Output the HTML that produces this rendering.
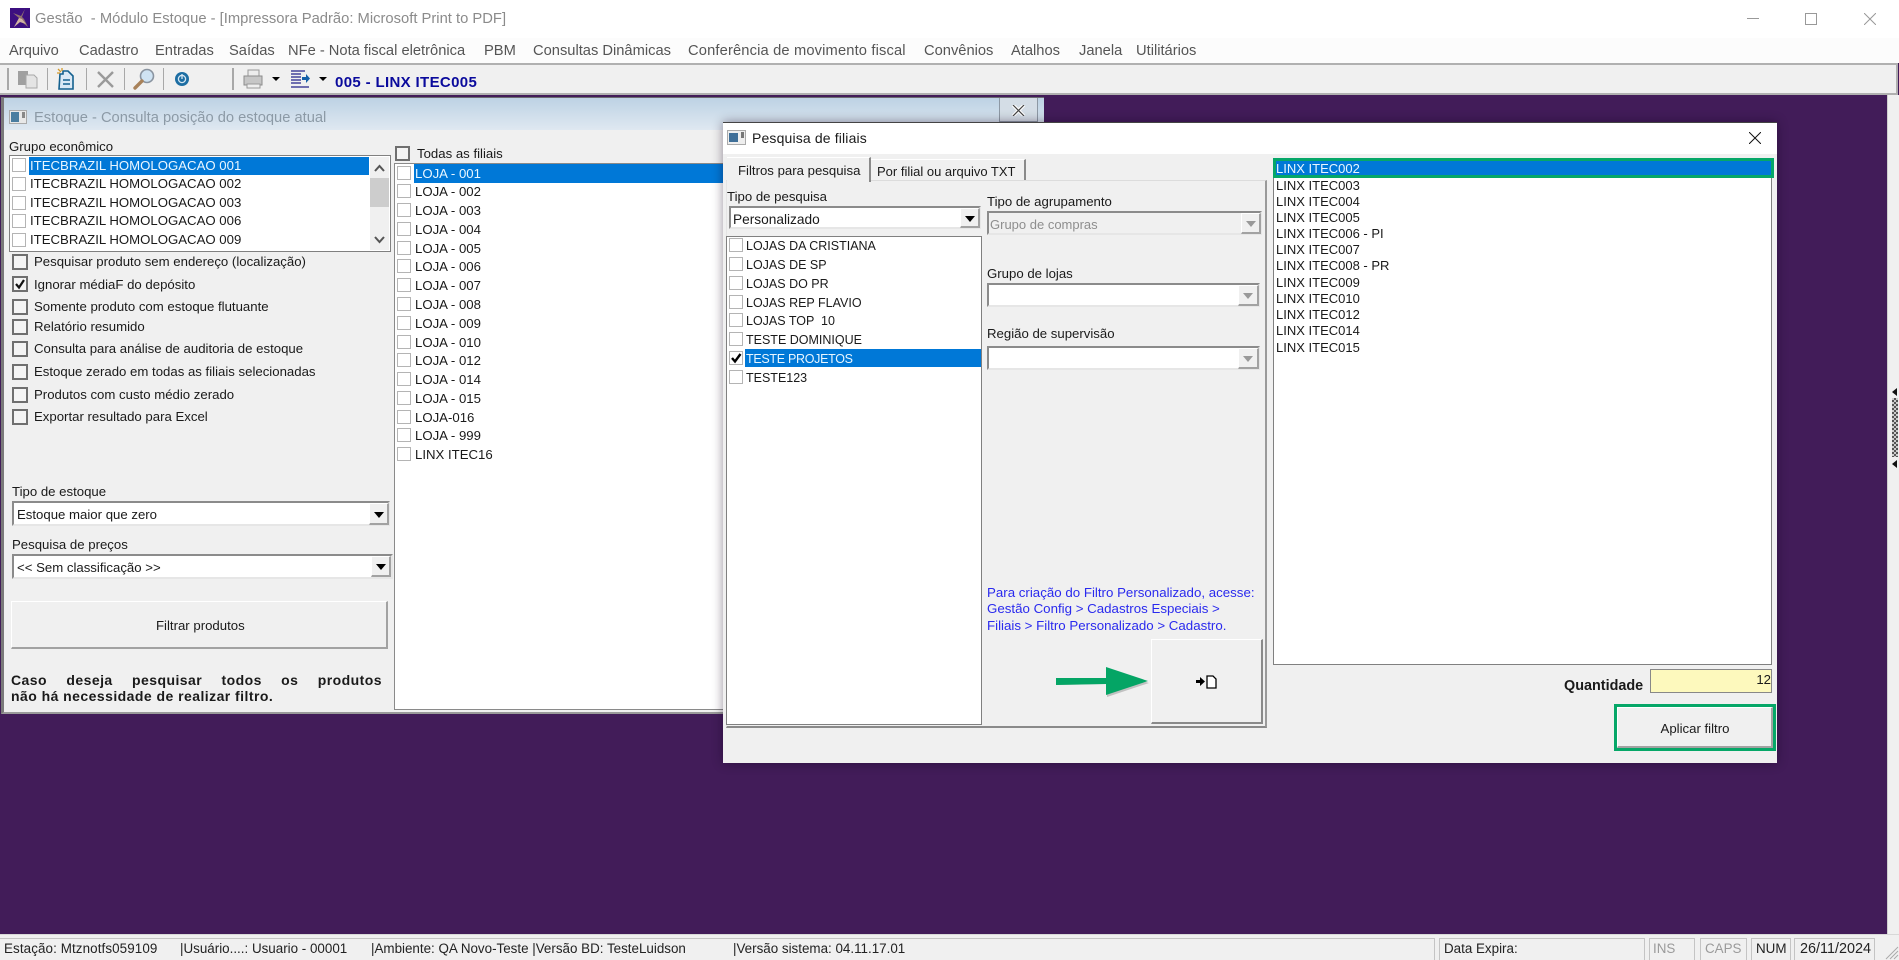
<!DOCTYPE html>
<html><head><meta charset="utf-8"><title>Gestão</title>
<style>
html,body{margin:0;padding:0;width:1899px;height:960px;overflow:hidden;background:#421c59}
*{box-sizing:border-box}
body{position:relative;font-family:"Liberation Sans",sans-serif;font-size:13.2px;color:#1a1a1a}
.a,.t{position:absolute}
.t{white-space:nowrap;line-height:16px;height:16px;margin-top:1px}
.m{font-size:14.7px;color:#555;top:42px}
.f13{font-size:13px}
.f125{font-size:12.5px}
.c1{position:absolute;width:16px;height:16px;border:2px solid #6f6f6f;background:#f4f4f4}
.c2{position:absolute;width:14px;height:14px;border:1px solid #b4b4b4;background:#fff}
.sep{position:absolute;top:68px;width:1px;height:22px;background:#a8a8a8}
.combo{position:absolute;background:#fff;border:2px solid #8b8b8b;border-right-color:#e6e6e6;border-bottom-color:#e6e6e6}
.btn{position:absolute;background:#f0f0f0;border-right:2px solid #a2a2a2;border-bottom:2px solid #a2a2a2;border-top:1px solid #fff;border-left:1px solid #fff}
.ar{position:absolute;width:0;height:0;border-left:5px solid transparent;border-right:5px solid transparent;border-top:6px solid #000}
.s{font-size:13.4px;color:#222;top:940px}
.cell{position:absolute;top:938px;height:22px;border:1px solid #c4c4c4;border-bottom:none}
</style></head><body>

<!-- title bar -->
<div class="a" style="left:0;top:0;width:1899px;height:38px;background:#fff"></div>
<svg class="a" style="left:10px;top:8px" width="20" height="20" viewBox="0 0 20 20"><rect width="20" height="20" fill="#3c0f80"/><path d="M15 1L11 8L3 5L9 10L4 19L10 14L13 15L18 19L14 11L12 9Z" fill="#8f7070"/><path d="M9 10L4 19L10 14L16 16L12 11Z" fill="#d2b4a4"/></svg>
<div class="t" style="left:35px;top:10px;font-size:14.77px;color:#8b8b8b;white-space:pre">Gestão  - Módulo Estoque - [Impressora Padrão: Microsoft Print to PDF]</div>
<div class="a" style="left:1747px;top:18px;width:12px;height:1px;background:#999"></div>
<div class="a" style="left:1805px;top:13px;width:12px;height:12px;border:1px solid #999"></div>
<svg class="a" style="left:1864px;top:13px" width="12" height="12" viewBox="0 0 12 12"><path d="M0 0L12 12M12 0L0 12" stroke="#999" fill="none"/></svg>

<!-- menu -->
<div class="a" style="left:0;top:38px;width:1899px;height:25px;background:#fcfcfc"></div>
<div class="t m" style="left:9px">Arquivo</div>
<div class="t m" style="left:79px">Cadastro</div>
<div class="t m" style="left:155px">Entradas</div>
<div class="t m" style="left:229px">Saídas</div>
<div class="t m" style="left:288px">NFe - Nota fiscal eletrônica</div>
<div class="t m" style="left:484px">PBM</div>
<div class="t m" style="left:533px">Consultas Dinâmicas</div>
<div class="t m" style="left:688px;letter-spacing:.15px">Conferência de movimento fiscal</div>
<div class="t m" style="left:924px">Convênios</div>
<div class="t m" style="left:1011px">Atalhos</div>
<div class="t m" style="left:1079px">Janela</div>
<div class="t m" style="left:1136px">Utilitários</div>

<!-- toolbar -->
<div class="a" style="left:0;top:63px;width:1898px;height:32px;background:#f0f0f0;border:2px solid #b0b0b0;border-left:none"></div>
<div class="sep" style="left:7px;width:2px"></div><div class="sep" style="left:47px"></div><div class="sep" style="left:86px"></div><div class="sep" style="left:124px"></div><div class="sep" style="left:163px"></div><div class="sep" style="left:232px;width:2px"></div>
<svg class="a" style="left:0;top:64px" width="340" height="30" viewBox="0 64 340 30">
<path d="M18 71h10v14h-10z" fill="#a0a0a0"/><path d="M26 75h8l3 3v10h-11z" fill="#e4e4e4" stroke="#a8a8a8"/>
<path d="M60 74h3v-3h5l5 5v13h-14z" fill="#dbe9f5" stroke="#14618f" stroke-width="1.6"/><path d="M63 80h7M63 84h7" stroke="#14618f" stroke-width="1.5"/><path d="M58 69l3 3M62 68v3M57 73h3" stroke="#d59a2c" stroke-width="1.3"/>
<path d="M98 72L113 87M113 72L98 87" stroke="#9a9a9a" stroke-width="2.4"/>
<circle cx="147" cy="76" r="6.5" fill="#cfe3f3" stroke="#8a94a0" stroke-width="1.6"/><path d="M142 81L135 88" stroke="#a8825a" stroke-width="3.4" stroke-linecap="round"/>
<circle cx="182" cy="79" r="7" fill="#1d6ea3"/><circle cx="182" cy="79" r="3.6" fill="none" stroke="#d6e6f2" stroke-width="1.3"/><path d="M182 74v5" stroke="#d6e6f2" stroke-width="1.3"/>
<path d="M248 70h11v6h-11z" fill="#ececec" stroke="#999"/><path d="M244 76h18v9h-18z" fill="#c6c6c6" stroke="#8c8c8c"/><path d="M247 84h13v4h-13z" fill="#eee" stroke="#999"/>
<path d="M272 77h8l-4 4z" fill="#000"/>
<path d="M291 71h14M291 74h10M291 77h10M291 80h10M291 83h10M291 87h18" stroke="#22228a" stroke-width="1.3"/><path d="M302 77h4v-3l4 4.500-4 4.500v-3h-4z" fill="#1560a8"/>
<path d="M319 77h8l-4 4z" fill="#000"/>
</svg>
<div class="t" style="left:335px;top:74px;font-size:15px;font-weight:bold;color:#0a0a9c;letter-spacing:.35px">005 - LINX ITEC005</div>

<!-- right strip -->
<div class="a" style="left:1887px;top:95px;width:12px;height:843px;background:#f0f0f0;border-left:1px solid #cfcfcf"></div>
<div class="a" style="left:1892px;top:388px;width:0;height:0;border-top:4px solid transparent;border-bottom:4px solid transparent;border-right:5px solid #111"></div>
<div class="a" style="left:1892px;top:398px;width:6px;height:59px;background:conic-gradient(#555 25%,#ccc 0 50%,#555 0 75%,#ccc 0) 0 0/4px 4px"></div>
<div class="a" style="left:1892px;top:460px;width:0;height:0;border-top:4px solid transparent;border-bottom:4px solid transparent;border-right:5px solid #111"></div>

<!-- Estoque window -->
<div class="a" style="left:1px;top:97px;width:1043px;height:617px;background:#f0f0f0;border-left:3px solid #7a7a7a;border-top:1px solid #6a6a70;border-bottom:2px solid #9a9a9a"></div>
<div class="a" style="left:4px;top:98px;width:1040px;height:32px;background:linear-gradient(180deg,#bdd2e4,#dfe8f1)"></div>
<svg class="a" style="left:9px;top:110px" width="18" height="14" viewBox="0 0 18 14"><rect x=".5" y=".5" width="17" height="13" fill="#e8e8e8" stroke="#aaa"/><rect x="2" y="2" width="8" height="10" fill="#4a7da0"/><rect x="13" y="2" width="3" height="6" fill="#888"/></svg>
<div class="t" style="left:34px;top:109px;font-size:14.7px;color:#8c9aa6">Estoque - Consulta posição do estoque atual</div>
<div class="a" style="left:999px;top:98px;width:39px;height:24px;background:#d4dde6;border:1px solid #8d98a4;border-top:none"></div>
<svg class="a" style="left:1012px;top:105px" width="13" height="11" viewBox="0 0 13 11"><path d="M1 0L12 11M12 0L1 11" stroke="#fff" stroke-width="3.4"/><path d="M1 0L12 11M12 0L1 11" stroke="#444" stroke-width="1.2"/></svg>

<div class="t" style="left:9px;top:138px">Grupo econômico</div>
<div class="a" style="left:9px;top:155px;width:382px;height:97px;background:#fff;border:1px solid #808080;border-width:1.500px"></div>
<div class="a" style="left:29px;top:157px;width:340px;height:18px;background:#0078d7"></div>
<div class="c2" style="left:12px;top:158px"></div><div class="t" style="left:30px;top:157px;color:#e8f6ff">ITECBRAZIL HOMOLOGACAO 001</div>
<div class="c2" style="left:12px;top:177px"></div><div class="t" style="left:30px;top:175px">ITECBRAZIL HOMOLOGACAO 002</div>
<div class="c2" style="left:12px;top:196px"></div><div class="t" style="left:30px;top:194px">ITECBRAZIL HOMOLOGACAO 003</div>
<div class="c2" style="left:12px;top:214px"></div><div class="t" style="left:30px;top:212px">ITECBRAZIL HOMOLOGACAO 006</div>
<div class="c2" style="left:12px;top:233px"></div><div class="t" style="left:30px;top:231px">ITECBRAZIL HOMOLOGACAO 009</div>
<div class="a" style="left:370px;top:157px;width:19px;height:93px;background:#f0f0f0"></div>
<div class="a" style="left:370px;top:178px;width:19px;height:29px;background:#cdcdcd"></div>
<svg class="a" style="left:373px;top:163px" width="13" height="82" viewBox="0 0 13 82"><path d="M2 8L6.500 3L11 8M2 74L6.500 79L11 74" fill="none" stroke="#555" stroke-width="2"/></svg>

<div class="c1" style="left:12px;top:254px"></div><div class="t" style="left:34px;top:253px">Pesquisar produto sem endereço (localização)</div>
<div class="c1" style="left:12px;top:276px"></div><svg class="a" style="left:14px;top:278px" width="12" height="12" viewBox="0 0 12 12"><path d="M2 6L5 9.500L10 2" fill="none" stroke="#111" stroke-width="2.200"/></svg><div class="t" style="left:34px;top:276px">Ignorar médiaF do depósito</div>
<div class="c1" style="left:12px;top:299px"></div><div class="t" style="left:34px;top:298px">Somente produto com estoque flutuante</div>
<div class="c1" style="left:12px;top:319px"></div><div class="t" style="left:34px;top:318px">Relatório resumido</div>
<div class="c1" style="left:12px;top:341px"></div><div class="t" style="left:34px;top:340px">Consulta para análise de auditoria de estoque</div>
<div class="c1" style="left:12px;top:364px"></div><div class="t" style="left:34px;top:363px">Estoque zerado em todas as filiais selecionadas</div>
<div class="c1" style="left:12px;top:387px"></div><div class="t" style="left:34px;top:386px">Produtos com custo médio zerado</div>
<div class="c1" style="left:12px;top:409px"></div><div class="t" style="left:34px;top:408px">Exportar resultado para Excel</div>

<div class="t" style="left:12px;top:483px">Tipo de estoque</div>
<div class="combo" style="left:12px;top:501px;width:378px;height:25px"></div>
<div class="t" style="left:17px;top:506px">Estoque maior que zero</div>
<div class="btn" style="left:369px;top:503px;width:20px;height:22px"></div><div class="ar" style="left:374px;top:512px"></div>
<div class="t" style="left:12px;top:536px">Pesquisa de preços</div>
<div class="btn" style="left:11px;top:601px;width:377px;height:48px"></div>
<div class="t" style="left:156px;top:617px">Filtrar produtos</div>
<div class="t" style="left:11px;top:671px;width:371px;font-weight:bold;font-size:14px;text-align:justify;text-align-last:justify;white-space:normal;letter-spacing:.45px">Caso deseja pesquisar todos os produtos</div>
<div class="t" style="left:11px;top:687px;font-weight:bold;font-size:14px;letter-spacing:.45px">não há necessidade de realizar filtro.</div>

<!-- lojas list -->
<div class="c1" style="left:395px;top:146px;width:15px;height:15px"></div><div class="t" style="left:417px;top:145px">Todas as filiais</div>
<div class="a" style="left:394px;top:163px;width:650px;height:547px;background:#fff;border:1px solid #8a8a8a;border-right:none;border-width:1.500px 0 1.500px 1.500px"></div>
<div class="a" style="left:414px;top:164px;width:630px;height:19px;background:#0078d7"></div>
<div class="combo" style="left:12px;top:554px;width:381px;height:25px"></div>
<div class="t" style="left:17px;top:559px">&lt;&lt; Sem classificação &gt;&gt;</div>
<div class="btn" style="left:371px;top:556px;width:20px;height:21px"></div><div class="ar" style="left:376px;top:564px"></div>

<div class="c2" style="left:397px;top:166px"></div><div class="t" style="left:415px;top:165px;color:#e8f6ff">LOJA - 001</div>
<div class="c2" style="left:397px;top:184px"></div><div class="t" style="left:415px;top:183px">LOJA - 002</div>
<div class="c2" style="left:397px;top:203px"></div><div class="t" style="left:415px;top:202px">LOJA - 003</div>
<div class="c2" style="left:397px;top:222px"></div><div class="t" style="left:415px;top:221px">LOJA - 004</div>
<div class="c2" style="left:397px;top:241px"></div><div class="t" style="left:415px;top:240px">LOJA - 005</div>
<div class="c2" style="left:397px;top:259px"></div><div class="t" style="left:415px;top:258px">LOJA - 006</div>
<div class="c2" style="left:397px;top:278px"></div><div class="t" style="left:415px;top:277px">LOJA - 007</div>
<div class="c2" style="left:397px;top:297px"></div><div class="t" style="left:415px;top:296px">LOJA - 008</div>
<div class="c2" style="left:397px;top:316px"></div><div class="t" style="left:415px;top:315px">LOJA - 009</div>
<div class="c2" style="left:397px;top:335px"></div><div class="t" style="left:415px;top:334px">LOJA - 010</div>
<div class="c2" style="left:397px;top:353px"></div><div class="t" style="left:415px;top:352px">LOJA - 012</div>
<div class="c2" style="left:397px;top:372px"></div><div class="t" style="left:415px;top:371px">LOJA - 014</div>
<div class="c2" style="left:397px;top:391px"></div><div class="t" style="left:415px;top:390px">LOJA - 015</div>
<div class="c2" style="left:397px;top:410px"></div><div class="t" style="left:415px;top:409px">LOJA-016</div>
<div class="c2" style="left:397px;top:428px"></div><div class="t" style="left:415px;top:427px">LOJA - 999</div>
<div class="c2" style="left:397px;top:447px"></div><div class="t" style="left:415px;top:446px">LINX ITEC16</div>

<!-- dialog -->
<div class="a" style="left:723px;top:122px;width:1054px;height:641px;background:#f0f0f0;box-shadow:0 0 10px rgba(20,0,30,.45)"></div>
<div class="a" style="left:723px;top:122px;width:1054px;height:32px;background:#fff;border-top:1px solid #444"></div>
<svg class="a" style="left:727px;top:130px" width="19" height="15" viewBox="0 0 19 15"><rect x=".5" y=".5" width="18" height="14" fill="#eee" stroke="#aaa"/><rect x="2" y="3" width="9" height="9" fill="#3f6f98"/><rect x="14" y="2" width="3" height="6" fill="#777"/></svg>
<div class="t" style="left:752px;top:129px;font-size:14px;letter-spacing:.15px">Pesquisa de filiais</div>
<svg class="a" style="left:1749px;top:132px" width="12" height="12" viewBox="0 0 12 12"><path d="M0 0L12 12M12 0L0 12" stroke="#111" fill="none"/></svg>

<!-- tabs and panel -->
<div class="a" style="left:726px;top:180px;width:541px;height:548px;border-right:2px solid #9a9a9a;border-bottom:2px solid #8a8a8a;border-top:1px solid #dcdcdc;border-left:1px solid #e4e4e4"></div>
<div class="a" style="left:727px;top:157px;width:144px;height:25px;background:#f0f0f0;border-right:2px solid #8a8a8a;border-top:1px solid #fff"></div>
<div class="a" style="left:871px;top:159px;width:155px;height:21px;border-right:2px solid #8a8a8a;border-top:1px solid #fff"></div>
<div class="t" style="left:738px;top:162px">Filtros para pesquisa</div>
<div class="t f13" style="left:877px;top:163px">Por filial ou arquivo TXT</div>

<div class="t" style="left:727px;top:188px">Tipo de pesquisa</div>
<div class="combo" style="left:729px;top:206px;width:252px;height:23px"></div>
<div class="t" style="left:733px;top:211px;font-size:13.7px">Personalizado</div>
<div class="btn" style="left:960px;top:208px;width:20px;height:20px"></div><div class="ar" style="left:965px;top:216px"></div>
<div class="a" style="left:726px;top:236px;width:256px;height:489px;background:#fff;border:1.500px solid #808080"></div>
<div class="a" style="left:745px;top:349px;width:236px;height:18px;background:#0078d7"></div>
<div class="c2" style="left:729px;top:238px"></div><div class="t f125" style="left:746px;top:237px">LOJAS DA CRISTIANA</div>
<div class="c2" style="left:729px;top:257px"></div><div class="t f125" style="left:746px;top:256px">LOJAS DE SP</div>
<div class="c2" style="left:729px;top:276px"></div><div class="t f125" style="left:746px;top:275px">LOJAS DO PR</div>
<div class="c2" style="left:729px;top:295px"></div><div class="t f125" style="left:746px;top:294px">LOJAS REP FLAVIO</div>
<div class="c2" style="left:729px;top:313px"></div><div class="t f125" style="left:746px;top:312px;white-space:pre">LOJAS TOP  10</div>
<div class="c2" style="left:729px;top:332px"></div><div class="t f125" style="left:746px;top:331px">TESTE DOMINIQUE</div>
<div class="c2" style="left:729px;top:351px"></div><svg class="a" style="left:730px;top:352px" width="12" height="12" viewBox="0 0 12 12"><path d="M2 6L5 9.500L10.500 2" fill="none" stroke="#000" stroke-width="2.400"/></svg><div class="t f125" style="left:746px;top:350px;color:#e8f6ff;letter-spacing:-.3px">TESTE PROJETOS</div>
<div class="c2" style="left:729px;top:370px"></div><div class="t f125" style="left:746px;top:369px">TESTE123</div>

<div class="t" style="left:987px;top:193px">Tipo de agrupamento</div>
<div class="combo" style="left:987px;top:211px;width:275px;height:24px;background:#f0f0f0"></div>
<div class="t f13" style="left:990px;top:216px;color:#8e8e8e">Grupo de compras</div>
<div class="btn" style="left:1241px;top:213px;width:20px;height:21px"></div><div class="ar" style="left:1246px;top:221px;border-top-color:#999"></div>
<div class="t" style="left:987px;top:265px">Grupo de lojas</div>
<div class="combo" style="left:987px;top:283px;width:273px;height:24px"></div>
<div class="btn" style="left:1238px;top:285px;width:21px;height:21px"></div><div class="ar" style="left:1243px;top:293px;border-top-color:#999"></div>
<div class="t" style="left:987px;top:325px">Região de supervisão</div>
<div class="combo" style="left:987px;top:346px;width:273px;height:24px"></div>
<div class="btn" style="left:1238px;top:348px;width:21px;height:21px"></div><div class="ar" style="left:1243px;top:356px;border-top-color:#999"></div>

<div class="t" style="left:987px;top:584px;color:#2a2aee;font-size:13.3px">Para criação do Filtro Personalizado, acesse:</div>
<div class="t" style="left:987px;top:600px;color:#2a2aee;font-size:13.3px">Gestão Config &gt; Cadastros Especiais &gt;</div>
<div class="t" style="left:987px;top:617px;color:#2a2aee;font-size:13.3px">Filiais &gt; Filtro Personalizado &gt; Cadastro.</div>

<div class="btn" style="left:1151px;top:639px;width:112px;height:85px;border-color:#fff #8a8a8a #8a8a8a #fff"></div>
<svg class="a" style="left:1196px;top:674px" width="22" height="15" viewBox="0 0 22 15"><path d="M0 6h4V3l5 4.500-5 4.500V9H0z" fill="#000"/><path d="M11 2h6l3 3v9h-9z" fill="#fff" stroke="#000" stroke-width="1.300"/></svg>
<svg class="a" style="left:1050px;top:660px" width="104" height="42" viewBox="0 0 104 42"><path d="M6 20h50v-12l42 13-42 14v-13l-50 1z" fill="#555" opacity=".3" transform="translate(1 2)"/><path d="M6 18h50v-11l42 14-42 14v-11l-50 1z" fill="#04a565"/></svg>

<!-- right filiais list -->
<div class="a" style="left:1273px;top:158px;width:499px;height:507px;background:#fff;border:1.500px solid #808080"></div>
<div class="a" style="left:1273px;top:158px;width:501px;height:20px;background:#0078d7;border:3px solid #06a768"></div>
<div class="t f13" style="left:1276px;top:160px;color:#e8f6ff">LINX ITEC002</div>
<div class="t f13" style="left:1276px;top:177px">LINX ITEC003</div>
<div class="t f13" style="left:1276px;top:193px">LINX ITEC004</div>
<div class="t f13" style="left:1276px;top:209px">LINX ITEC005</div>
<div class="t f13" style="left:1276px;top:225px">LINX ITEC006 - PI</div>
<div class="t f13" style="left:1276px;top:241px">LINX ITEC007</div>
<div class="t f13" style="left:1276px;top:257px">LINX ITEC008 - PR</div>
<div class="t f13" style="left:1276px;top:274px">LINX ITEC009</div>
<div class="t f13" style="left:1276px;top:290px">LINX ITEC010</div>
<div class="t f13" style="left:1276px;top:306px">LINX ITEC012</div>
<div class="t f13" style="left:1276px;top:322px">LINX ITEC014</div>
<div class="t f13" style="left:1276px;top:339px">LINX ITEC015</div>

<div class="t" style="left:1564px;top:677px;font-weight:bold;font-size:14.4px">Quantidade</div>
<div class="a" style="left:1650px;top:669px;width:122px;height:24px;background:#fdf9bd;border:1px solid #888"></div>
<div class="t" style="left:1740px;top:671px;width:31px;text-align:right">12</div>
<div class="btn" style="left:1617px;top:707px;width:156px;height:41px"></div>
<div class="a" style="left:1614px;top:704px;width:162px;height:47px;border:3px solid #06a768"></div>
<div class="t" style="left:1660px;top:720px;width:70px;text-align:center">Aplicar filtro</div>

<!-- status bar -->
<div class="a" style="left:0;top:934px;width:1899px;height:26px;background:#f0f0f0;border-top:1px solid #d8d8d8"></div>
<div class="a" style="left:0;top:938px;width:1435px;height:22px;border:1px solid #c4c4c4;border-bottom:none;border-left:none"></div>
<div class="cell" style="left:1439px;width:206px"></div>
<div class="cell" style="left:1649px;width:46px"></div>
<div class="cell" style="left:1700px;width:47px"></div>
<div class="cell" style="left:1751px;width:40px"></div>
<div class="cell" style="left:1794px;width:81px"></div>
<div class="t s" style="left:4px;letter-spacing:.1px">Estação: Mtznotfs059109</div>
<div class="t s" style="left:180px">|Usuário....: Usuario - 00001</div>
<div class="t s" style="left:371px">|Ambiente: QA Novo-Teste |Versão BD: TesteLuidson</div>
<div class="t s" style="left:733px">|Versão sistema: 04.11.17.01</div>
<div class="t s" style="left:1444px">Data Expira:</div>
<div class="t s" style="left:1653px;color:#9a9a9a">INS</div>
<div class="t s" style="left:1705px;color:#9a9a9a">CAPS</div>
<div class="t s" style="left:1756px">NUM</div>
<div class="t s" style="left:1800px;font-size:14.4px">26/11/2024</div>
<svg class="a" style="left:1883px;top:944px" width="16" height="16" viewBox="0 0 16 16"><path d="M15 3L3 15M15 7L7 15M15 11L11 15" stroke="#aaa"/></svg>
</body></html>
